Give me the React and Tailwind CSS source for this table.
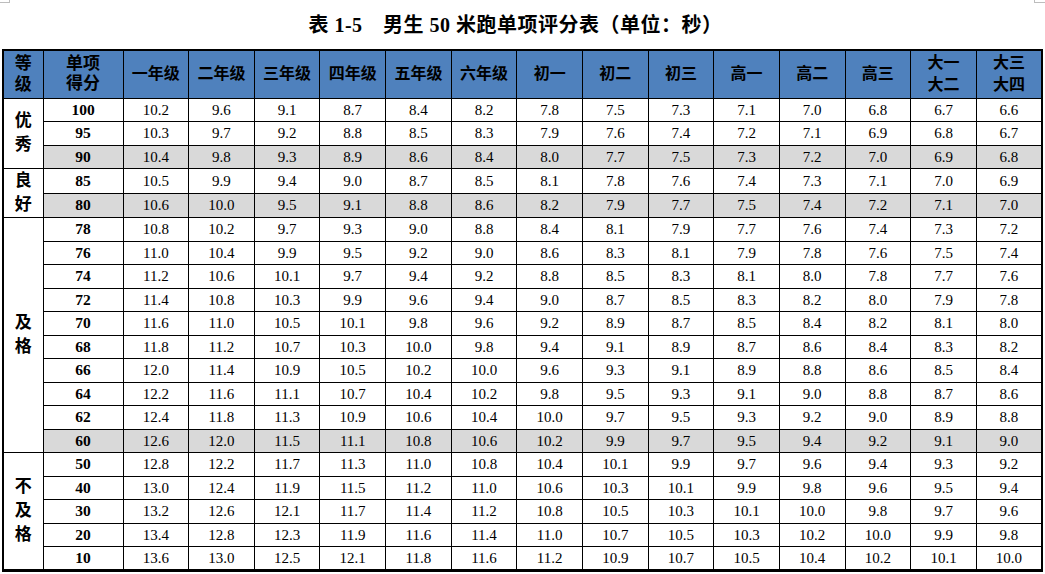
import React from "react";

const grades = ["一年级", "二年级", "三年级", "四年级", "五年级", "六年级", "初一", "初二", "初三", "高一", "高二", "高三", ["大一", "大二"], ["大三", "大四"]];
const base = [102, 96, 91, 87, 84, 82, 78, 75, 73, 71, 70, 68, 67, 66];
const rows = [
  [100, 0], [95, 1], [90, 2], [85, 3], [80, 4], [78, 6], [76, 8], [74, 10], [72, 12], [70, 14],
  [68, 16], [66, 18], [64, 20], [62, 22], [60, 24], [50, 26], [40, 28], [30, 30], [20, 32], [10, 34],
];
const gray = new Set([90, 80, 60]);
const groups = { 100: [3, ["优", "秀"]], 85: [2, ["良", "好"]], 78: [10, ["及", "格"]], 50: [5, ["不", "及", "格"]] };

const serif = { fontFamily: '"Liberation Serif", "Noto Sans CJK SC", serif' };

export default function App() {
  return (
    <div className="relative w-[1045px] h-[574px] bg-white overflow-hidden" style={serif}>
      <div className="absolute left-0 top-0 w-[10px] h-[3px] border-r border-b border-[#bdbdbd]" />
      <div className="absolute left-[1034px] top-0 w-[11px] h-[3px] border-l border-b border-[#bdbdbd]" />
      <div className="h-[49px] flex items-center justify-center pr-[14px] pt-[1px] text-[20px] font-bold tracking-[0.5px] text-black">
        表 1-5　男生 50 米跑单项评分表（单位：秒）
      </div>
      <table className="table-fixed border-collapse ml-[2px] w-[1041px] border-2 border-b-[3px] border-black text-black">
        <colgroup>
          <col className="w-[40px]" />
          <col className="w-[80px]" />
          {grades.map((_, i) => (
            <col key={i} />
          ))}
        </colgroup>
        <thead>
          <tr className="h-[48px] bg-[#4f81bd]">
            <th className="border border-black text-[17px] font-bold leading-[21px] p-0 align-middle">
              <div>等</div>
              <div>级</div>
            </th>
            <th className="border border-black text-[17px] font-bold leading-[20px] p-0 align-middle">
              <div>单项</div>
              <div>得分</div>
            </th>
            {grades.map((g, i) => (
              <th key={i} className="border border-black text-[16px] font-bold leading-[22px] p-0 align-middle">
                {Array.isArray(g) ? (
                  <>
                    <div>{g[0]}</div>
                    <div>{g[1]}</div>
                  </>
                ) : (
                  g
                )}
              </th>
            ))}
          </tr>
        </thead>
        <tbody>
          {rows.map(([score, off]) => {
            const grp = groups[score];
            const bg = gray.has(score) ? "bg-[#d9d9d9]" : "";
            return (
              <tr key={score} className="h-[23.5px]">
                {grp && (
                  <td rowSpan={grp[0]} className="border border-black text-[17px] font-bold leading-[24px] text-center p-0 align-middle">
                    {grp[1].map((c, j) => (
                      <div key={j}>{c}</div>
                    ))}
                  </td>
                )}
                <td className={`border border-black text-[15.5px] font-bold text-center p-0 leading-[22px] ${bg}`}>{score}</td>
                {base.map((b, i) => (
                  <td key={i} className={`border border-black text-[15px] text-center p-0 leading-[22px] ${bg}`}>
                    {((b + off) / 10).toFixed(1)}
                  </td>
                ))}
              </tr>
            );
          })}
        </tbody>
      </table>
    </div>
  );
}
